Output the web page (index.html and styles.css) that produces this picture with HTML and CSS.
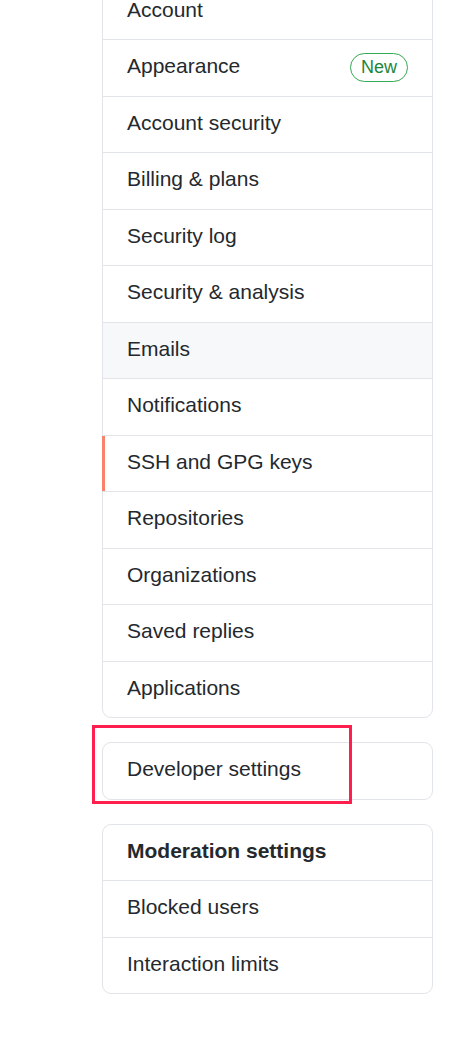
FILE: index.html
```html
<!DOCTYPE html>
<html lang="en">
<head>
<meta charset="utf-8">
<title>Settings</title>
<link rel="stylesheet" href="styles.css">
</head>
<body>
<div class="sidebar">
  <nav class="menu">
    <a class="menu-item">Account</a>
    <a class="menu-item">Appearance <span class="label">New</span></a>
    <a class="menu-item">Account security</a>
    <a class="menu-item">Billing &amp; plans</a>
    <a class="menu-item">Security log</a>
    <a class="menu-item">Security &amp; analysis</a>
    <a class="menu-item hover">Emails</a>
    <a class="menu-item">Notifications</a>
    <a class="menu-item selected">SSH and GPG keys</a>
    <a class="menu-item">Repositories</a>
    <a class="menu-item">Organizations</a>
    <a class="menu-item">Saved replies</a>
    <a class="menu-item">Applications</a>
  </nav>
  <nav class="menu annotated">
    <a class="menu-item">Developer settings</a>
    <span class="highlight"></span>
  </nav>
  <nav class="menu">
    <h3 class="menu-heading">Moderation settings</h3>
    <a class="menu-item">Blocked users</a>
    <a class="menu-item">Interaction limits</a>
  </nav>
</div>
</body>
</html>
```

FILE: styles.css
```css
html, body {
  margin: 0;
  padding: 0;
  background: #ffffff;
}

body {
  font-family: "Liberation Sans", Arial, sans-serif;
  color: #24292e;
  font-size: 21px;
}

.sidebar {
  width: 331px;
  margin-left: 102px;
  margin-top: -17.5px;
  display: flex;
  flex-direction: column;
  gap: 24px;
}

.menu {
  border: 1px solid #e1e4e8;
  border-radius: 9px;
  background: #ffffff;
  display: flex;
  flex-direction: column;
}

.menu-item,
.menu-heading {
  display: flex;
  align-items: center;
  justify-content: space-between;
  height: 31.5px;
  padding: 10px 24px 14px;
  line-height: 31.5px;
  font-size: 21px;
  color: #24292e;
  text-decoration: none;
  border-top: 1px solid #e1e4e8;
  margin: 0;
  position: relative;
}

.menu > :first-child {
  border-top: none;
}

.menu-heading {
  font-weight: bold;
}

.menu-item.hover {
  background: #f6f8fa;
}

.menu-item.selected::before {
  content: "";
  position: absolute;
  left: -1px;
  top: 0;
  bottom: 0;
  width: 3px;
  background: #f9826c;
}

.label {
  display: inline-block;
  font-size: 18px;
  line-height: 27px;
  padding: 0 10px;
  margin: 2px 0 -2px;
  border: 1.5px solid #34a853;
  border-radius: 2em;
  color: #22863a;
}

.annotated {
  position: relative;
}

.highlight {
  position: absolute;
  box-sizing: border-box;
  left: -11px;
  top: -18px;
  width: 260px;
  height: 79px;
  border: 3.5px solid #ff1f4f;
  pointer-events: none;
}
```
